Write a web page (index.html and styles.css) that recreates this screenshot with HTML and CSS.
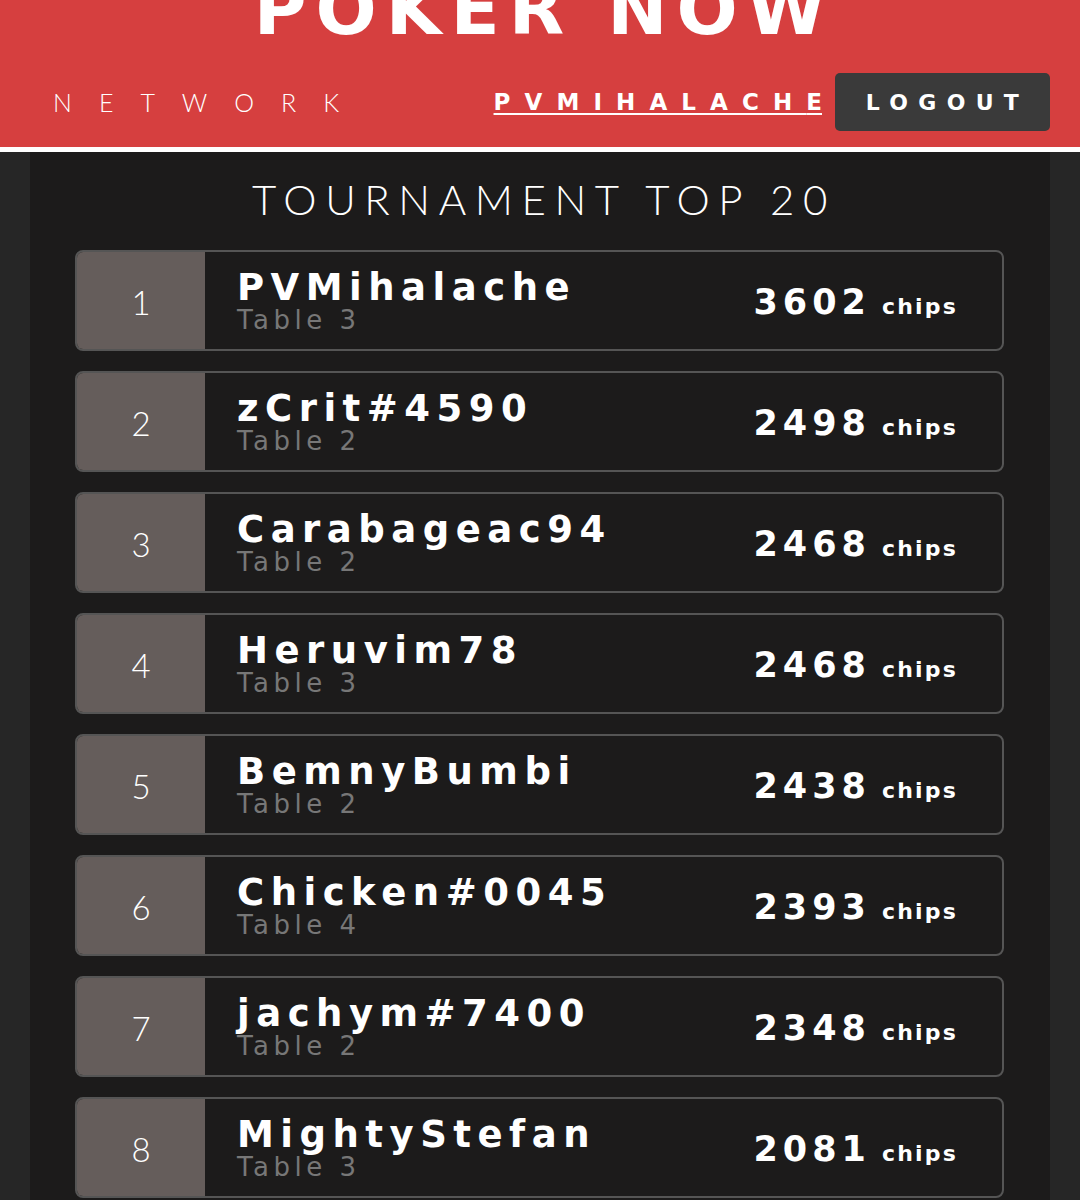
FILE: index.html
```html
<!DOCTYPE html>
<html>
<head>
<meta charset="utf-8">
<link rel="stylesheet" href="styles.css">
</head>
<body>
<header class="header">
  <div class="brand">POKER NOW</div>
  <div class="nav">
    <div class="network">NETWOR<span class="last">K</span></div>
    <div class="user">
      <a class="username">PVMIHALACH<span class="last">E</span></a>
      <button class="logout">LOGOUT</button>
    </div>
  </div>
</header>
<main class="panel">
  <h1 class="title">TOURNAMENT TOP 20</h1>
  <div class="list">
    <div class="row"><div class="rank">1</div><div class="info"><div class="name">PVMihalache</div><div class="table">Table 3</div></div><div class="chips"><span class="num">3602</span><span class="unit">chips</span></div></div>
    <div class="row"><div class="rank">2</div><div class="info"><div class="name">zCrit#4590</div><div class="table">Table 2</div></div><div class="chips"><span class="num">2498</span><span class="unit">chips</span></div></div>
    <div class="row"><div class="rank">3</div><div class="info"><div class="name">Carabageac94</div><div class="table">Table 2</div></div><div class="chips"><span class="num">2468</span><span class="unit">chips</span></div></div>
    <div class="row"><div class="rank">4</div><div class="info"><div class="name">Heruvim78</div><div class="table">Table 3</div></div><div class="chips"><span class="num">2468</span><span class="unit">chips</span></div></div>
    <div class="row"><div class="rank">5</div><div class="info"><div class="name">BemnyBumbi</div><div class="table">Table 2</div></div><div class="chips"><span class="num">2438</span><span class="unit">chips</span></div></div>
    <div class="row"><div class="rank">6</div><div class="info"><div class="name">Chicken#0045</div><div class="table">Table 4</div></div><div class="chips"><span class="num">2393</span><span class="unit">chips</span></div></div>
    <div class="row"><div class="rank">7</div><div class="info"><div class="name">jachym#7400</div><div class="table">Table 2</div></div><div class="chips"><span class="num">2348</span><span class="unit">chips</span></div></div>
    <div class="row"><div class="rank">8</div><div class="info"><div class="name">MightyStefan</div><div class="table">Table 3</div></div><div class="chips"><span class="num">2081</span><span class="unit">chips</span></div></div>
  </div>
</main>
</body>
</html>
```
FILE: styles.css
```css
* { box-sizing: border-box; }
html, body { margin: 0; padding: 0; }
body {
  background: #262626;
  font-family: "Lato", "DejaVu Sans", sans-serif;
  color: #fff;
  height: 1200px;
  overflow: hidden;
}
.header {
  background: #d63f3f;
  height: 152px;
  border-bottom: 5px solid #fff;
  overflow: hidden;
}
.brand {
  text-align: center;
  font-family: "DejaVu Sans", sans-serif;
  font-weight: bold;
  font-size: 72px;
  letter-spacing: 9px;
  padding-left: 9px;
  line-height: 72px;
  margin-top: -27px;
  color: #fff;
}
.nav {
  display: flex;
  justify-content: space-between;
  align-items: center;
  padding: 0 30px 0 53px;
  margin-top: 28px;
}
.network {
  font-family: "Lato", sans-serif;
  font-weight: 300;
  font-size: 25px;
  letter-spacing: 27px;
  color: #fff;
}
.last { letter-spacing: 0; }
.user { display: flex; align-items: center; gap: 13px; }
.username {
  font-family: "DejaVu Sans", sans-serif;
  font-weight: bold;
  font-size: 23px;
  letter-spacing: 14.1px;
  text-decoration: underline;
  text-decoration-thickness: 2px;
  text-underline-offset: 3px;
  color: #fff;
}
.logout {
  background: #3a3a3a;
  border: none;
  border-radius: 5px;
  width: 215px;
  height: 58px;
  padding: 0 0 0 10px;
  color: #fff;
  font-family: "DejaVu Sans", sans-serif;
  font-weight: bold;
  font-size: 22px;
  letter-spacing: 10.3px;
}
.panel {
  margin: 0 30px;
  background: #1c1b1b;
  padding: 22px 46px 0 45px;
  min-height: 1048px;
}
.title {
  margin: 0 0 26px;
  padding-left: 9px;
  text-align: center;
  font-family: "Lato", sans-serif;
  font-weight: 300;
  font-size: 42px;
  letter-spacing: 8.6px;
  line-height: 50px;
}
.list { display: flex; flex-direction: column; gap: 20px; }
.row {
  display: flex;
  align-items: center;
  height: 101px;
  border: 2px solid #555;
  border-radius: 8px;
  overflow: hidden;
  background: #1c1b1b;
}
.rank {
  width: 128px;
  align-self: stretch;
  background: #655d5b;
  display: flex;
  align-items: center;
  justify-content: center;
  font-family: "Lato", sans-serif;
  font-weight: 300;
  font-size: 33px;
  padding-top: 2px;
}
.info { flex: 1; padding-left: 32px; padding-top: 1px; }
.name {
  font-family: "DejaVu Sans", sans-serif;
  font-weight: bold;
  font-size: 37px;
  line-height: 37px;
  letter-spacing: 6.5px;
}
.table {
  font-family: "DejaVu Sans", sans-serif;
  font-size: 26px;
  line-height: 26px;
  margin-top: 1px;
  color: #777;
  letter-spacing: 4.5px;
}
.chips {
  padding-right: 44px;
  display: flex;
  align-items: baseline;
  gap: 11px;
  padding-top: 2px;
}
.num {
  font-family: "DejaVu Sans", sans-serif;
  font-weight: bold;
  font-size: 35px;
  letter-spacing: 5px;
}
.unit {
  font-family: "DejaVu Sans", sans-serif;
  font-weight: bold;
  font-size: 22px;
  letter-spacing: 2.2px;
}
```
